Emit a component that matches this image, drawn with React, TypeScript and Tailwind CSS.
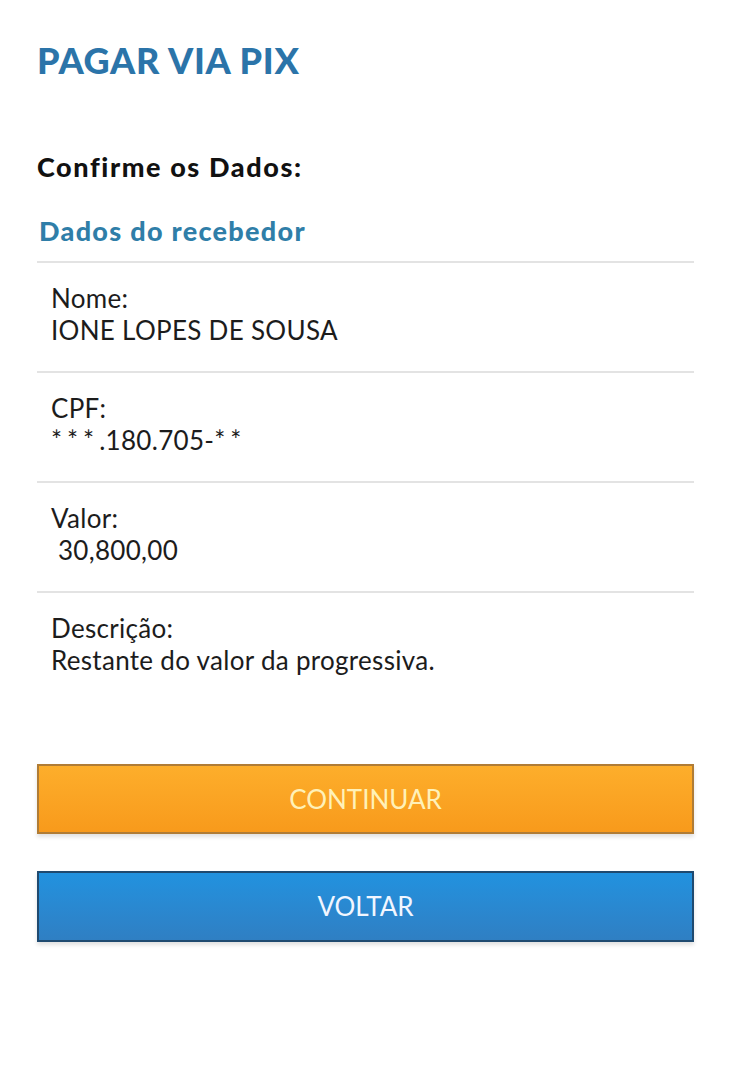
import React from "react";

const rows: { label: string; value: React.ReactNode }[] = [
  { label: "Nome:", value: "IONE LOPES DE SOUSA" },
  {
    label: "CPF:",
    value: (
      <>
        <span className="tracking-[5px]">***</span>.180.705-<span className="tracking-[5px]">**</span>
      </>
    ),
  },
  { label: "Valor:", value: "\u00a030,800,00" },
  { label: "Descrição:", value: "Restante do valor da progressiva." },
];

export default function App() {
  return (
    <div className="min-h-[1080px] bg-white px-[37px] pt-[38px] font-['Lato',sans-serif]">
      <h1 className="text-[36px] font-black leading-[44px] tracking-[0.7px] text-[#2b74a9]">PAGAR VIA PIX</h1>

      <h2 className="mt-[68px] text-[27px] font-black leading-[34px] tracking-[1.6px] text-[#111]">Confirme os Dados:</h2>
      <h3 className="ml-[2px] mt-[30px] text-[27px] font-black leading-[34px] tracking-[1.3px] text-[#2f7ea8]">Dados do recebedor</h3>

      <div className="mt-[13px] border-t-2 border-[#e3e3e3]">
        {rows.map((r, i) => (
          <div
            key={r.label}
            className={`px-[14px] pt-[19px] ${i < rows.length - 1 ? "h-[110px] border-b-2 border-[#e3e3e3]" : "h-[142px]"}`}
          >
            <div className="text-[26px] font-normal leading-[32px] tracking-[0.3px] text-[#1c1c1c]">{r.label}</div>
            <div className="text-[26px] font-normal leading-[32px] tracking-[0.3px] text-[#1c1c1c]">{r.value}</div>
          </div>
        ))}
      </div>

      <button className="mt-[29px] flex h-[70px] w-full items-center justify-center border-2 border-[#b07c35] bg-gradient-to-b from-[#fdae2b] to-[#f89a1b] text-[26px] font-normal text-[#fff1b8] shadow-[0_3px_4px_rgba(0,0,0,0.12)]">
        CONTINUAR
      </button>
      <button className="mt-[37px] flex h-[71px] w-full items-center justify-center border-2 border-[#1f4a70] bg-gradient-to-b from-[#2192df] to-[#2f7fc3] text-[26px] font-normal text-[#f1f6ff] shadow-[0_3px_4px_rgba(0,0,0,0.12)]">
        VOLTAR
      </button>
    </div>
  );
}
